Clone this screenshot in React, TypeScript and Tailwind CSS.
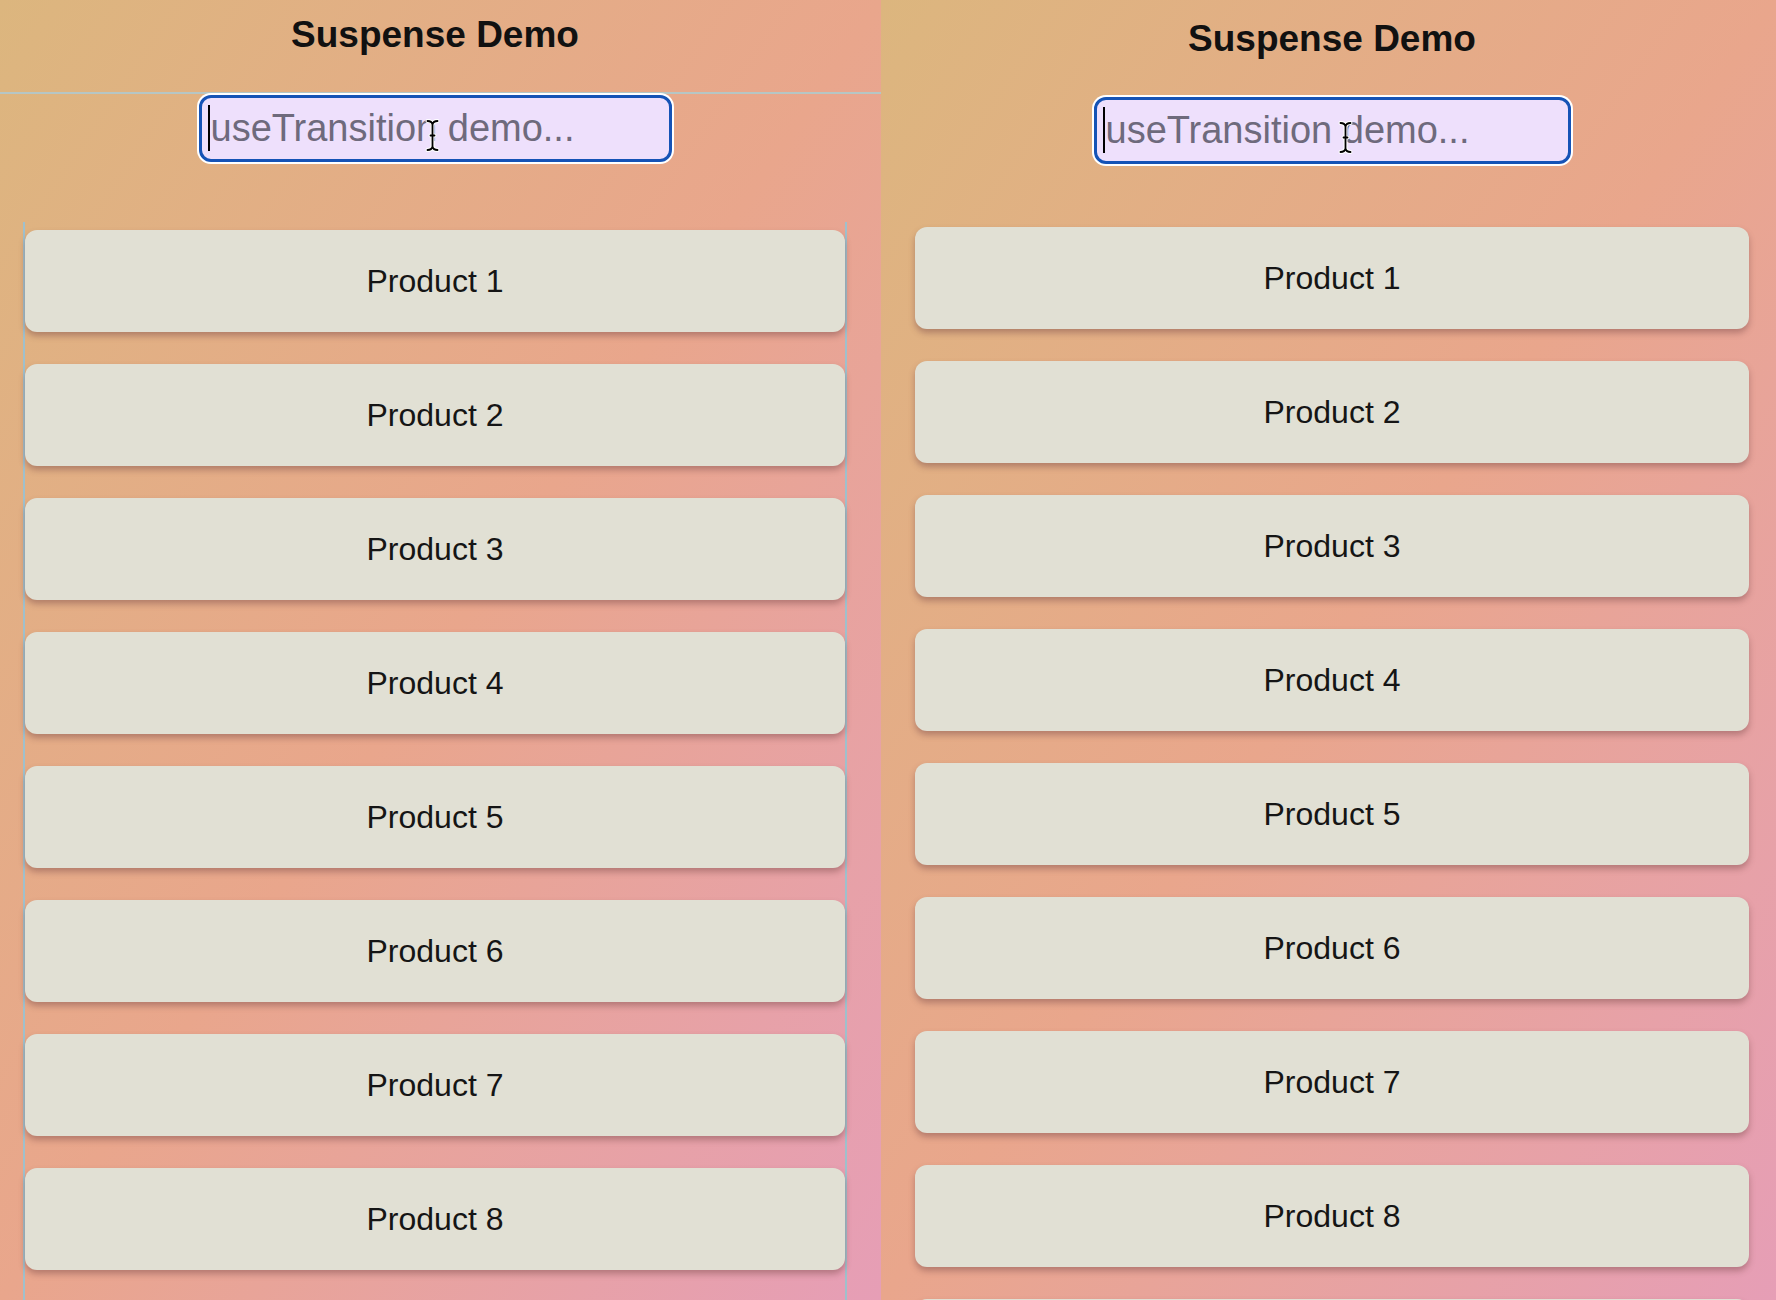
import React from "react";

const font = "font-['Liberation_Sans',Arial,sans-serif]";

const IBeam = ({ className }: { className: string }) => (
  <svg viewBox="0 0 15 33" width={15} height={33} className={className}>
    <g fill="none" strokeLinecap="round">
      <path
        d="M2.5 2 C5 2 7 3 7.5 5.5 C8 3 10 2 12.5 2 M7.5 5.5 V27.5 M2.5 31 C5 31 7 30 7.5 27.5 C8 30 10 31 12.5 31 M5.5 16.5 H9.5"
        stroke="#fff"
        strokeWidth={4}
      />
      <path
        d="M2.5 2 C5 2 7 3 7.5 5.5 C8 3 10 2 12.5 2 M7.5 5.5 V27.5 M2.5 31 C5 31 7 30 7.5 27.5 C8 30 10 31 12.5 31 M5.5 16.5 H9.5"
        stroke="#000"
        strokeWidth={1.8}
      />
    </g>
  </svg>
);

const SearchBox = ({ wide, beamLeft }: { wide: boolean; beamLeft: string }) => (
  <div className={`relative ${wide ? "w-[477px]" : "w-[473px]"} h-[67px]`}>
    <input
      readOnly
      placeholder="useTransition demo..."
      className={`${font} w-full h-full rounded-[12px] border-[3px] border-[#1553b6] bg-[#eee0fc] pl-[9px] text-[38px] text-[#222] placeholder:text-[#6e6a7c] outline-none shadow-[0_0_0_2px_#ffffff]`}
    />
    {/* text caret */}
    <div className="absolute left-[9px] top-[10px] h-[46px] w-[2px] bg-black" />
    {/* mouse pointer */}
    <IBeam className={`absolute top-[24px] ${beamLeft}`} />
  </div>
);

const ProductCard = ({ n, wide }: { n?: number; wide: boolean }) => (
  <div
    className={`${font} ${wide ? "w-[834px]" : "w-[820px]"} h-[102px] shrink-0 rounded-[12px] bg-[#e1e0d4] flex items-center justify-center text-[32px] text-[#151515] shadow-[0_4px_6px_rgba(120,70,70,0.45)]`}
  >
    {n ? `Product ${n}` : null}
  </div>
);

const products = [1, 2, 3, 4, 5, 6, 7, 8];

export default function App() {
  return (
    <div className="flex h-[1300px] w-[1776px] overflow-hidden">
      {/* left: pending transition */}
      <div className="w-[881px] h-full flex flex-col bg-linear-to-br from-[#dcb67e] via-[#e9a68c] to-[#e69eb6]">
        <div className="w-[870px] flex justify-center pt-[16px]">
          <h1 className={`${font} text-[37px] leading-none font-bold text-[#111]`}>Suspense Demo</h1>
        </div>
        <div className="mt-[39px] h-[2px] w-full shrink-0 bg-[#b6c6c4]" />
        <div className="w-[870px] flex-1 flex flex-col items-center">
          <div className="mt-[1px]">
            <SearchBox wide={false} beamLeft="left-[226px]" />
          </div>
          <div className="mt-[60px] w-[824px] flex-1 border-x-2 border-[#9fc0cc] pt-[8px] flex flex-col items-center gap-[32px]">
            {products.map((n) => (
              <ProductCard key={n} n={n} wide={false} />
            ))}
          </div>
        </div>
      </div>

      {/* right: settled */}
      <div className="w-[895px] h-full pl-[7px] flex flex-col items-center bg-linear-to-br from-[#dcb67e] via-[#e9a68c] to-[#e69eb6]">
        <h1 className={`${font} mt-[20px] text-[37px] leading-none font-bold text-[#111]`}>Suspense Demo</h1>
        <div className="mt-[40px]">
          <SearchBox wide beamLeft="left-[244px]" />
        </div>
        <div className="mt-[63px] flex flex-col items-center gap-[32px]">
          {products.map((n) => (
            <ProductCard key={n} n={n} wide />
          ))}
          <ProductCard wide />
        </div>
      </div>
    </div>
  );
}
